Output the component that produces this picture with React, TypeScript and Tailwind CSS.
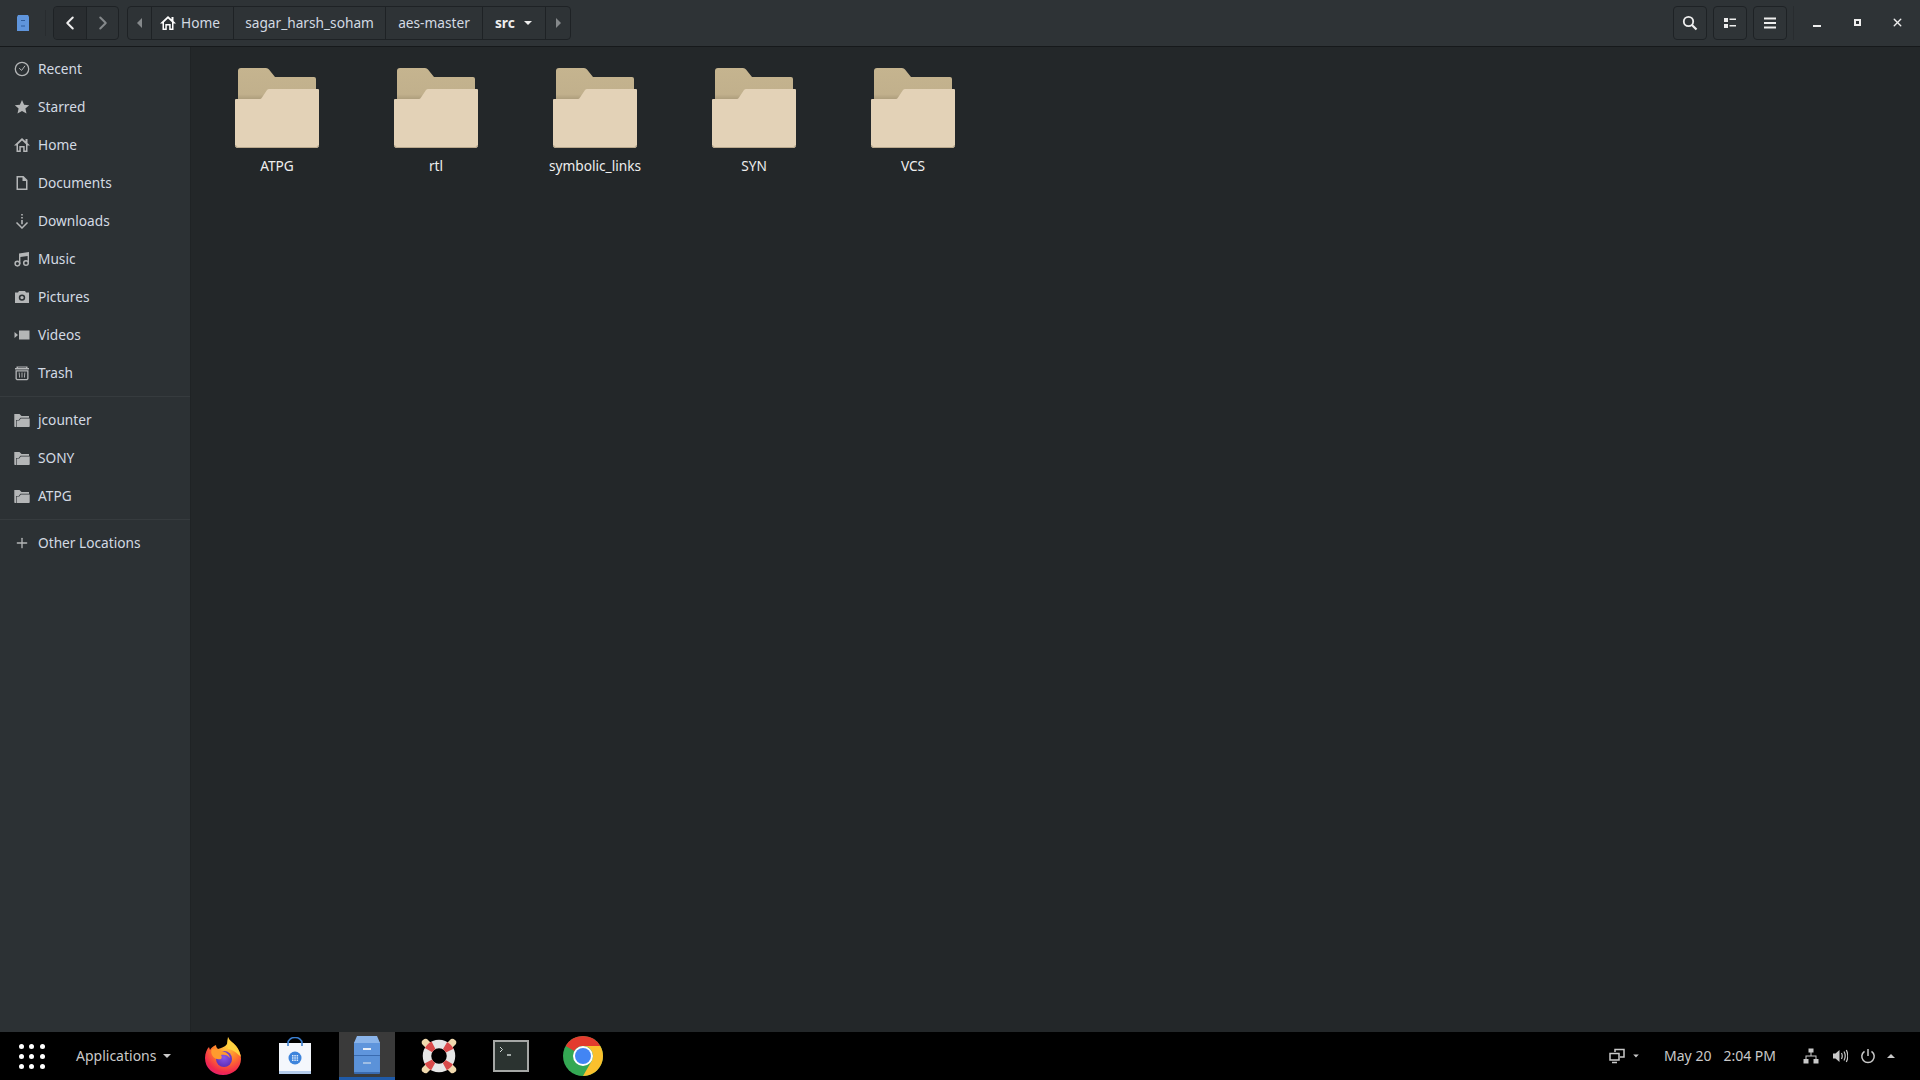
import React from 'react'
import { ChevronLeft, ChevronRight, X, Plus } from 'lucide-react'

const font = { fontFamily: '"Noto Sans", sans-serif' }

const Ico = ({ children, size = 16, className = '' }: { children: React.ReactNode; size?: number; className?: string }) => (
  <svg width={size} height={size} viewBox="0 0 16 16" fill="currentColor" className={`shrink-0 ${className}`}>
    {children}
  </svg>
)

const ClockIcon = () => (
  <Ico>
    <circle cx="8" cy="8" r="6.7" fill="none" stroke="currentColor" strokeWidth="1.3" />
    <path d="M5.2 7.2 7.6 9.4 11 4.8" fill="none" stroke="currentColor" strokeWidth="1" />
  </Ico>
)
const StarIcon = () => (
  <Ico>
    <path d="M8 1l2.1 4.7 5.1.5-3.8 3.4 1.1 5L8 12l-4.500 2.600 1.100-5L.8 6.200l5.100-.5z" />
  </Ico>
)
const HomeIcon = () => (
  <Ico>
    <path d="M8 1 0 8.500h2.500V15h4.300v-4.500h2.400V15h4.300V8.500H16l-2.500-2.400V2h-2v2.200zM8 3.600 12 7.300v6.200h-1.300V9H5.300v4.500H4V7.300z" fillRule="evenodd" />
  </Ico>
)
const DocIcon = () => (
  <Ico>
    <path d="M2.500 1h7L13.500 5v10h-11zM4 2.500v11h8V6H8.500V2.500z" fillRule="evenodd" />
  </Ico>
)
const DownloadIcon = () => (
  <Ico>
    <path d="M7.200 1h1.600v1.600H7.200zM7.200 4h1.600v1.600H7.200zM7.200 7h1.600v4.200H7.200z" />
    <path d="M2.500 9.500 8 15l5.500-5.500" fill="none" stroke="currentColor" strokeWidth="1.500" />
  </Ico>
)
const MusicIcon = () => (
  <Ico>
    <path d="M5 2.500 15 1v10h-1.400V5L6.400 6v7H5z" />
    <circle cx="3.400" cy="12.600" r="2.300" fill="none" stroke="currentColor" strokeWidth="1.500" />
    <circle cx="12" cy="12" r="2.300" fill="none" stroke="currentColor" strokeWidth="1.500" />
  </Ico>
)
const CameraIcon = () => (
  <Ico>
    <path d="M1 3.500h3L5 2h6l1 1.500h3V14H1zM8 5.400a3.200 3.200 0 1 0 0 6.400 3.200 3.200 0 0 0 0-6.400zM8 6.900a1.700 1.700 0 1 1 0 3.400 1.700 1.700 0 0 1 0-3.400z" fillRule="evenodd" />
  </Ico>
)
const VideoIcon = () => (
  <Ico>
    <path d="M5 3.500h10.500v9H5zM.5 5 4 8 .5 11z" />
  </Ico>
)
const TrashIcon = () => (
  <Ico>
    <path d="M2.500 1.500h11V3H15v1.500H1V3h1.500zM4 2.500V3h8v-.5z" fillRule="evenodd" />
    <path d="M1.500 5.200h13V14l-1.300 1.300H2.800L1.500 14zM2.800 6.500V13.400l.6.600h9.200l.6-.6V6.500z" fillRule="evenodd" />
    <path d="M4.700 7.500h.9l.4 5h-.9zM7.550 7.500h.9v5h-.9zM10.400 7.500h.9l-.4 5H10z" />
  </Ico>
)
const SmallFolderIcon = () => (
  <Ico>
    <path d="M.3 2h5.200l2 2H15v1.800H6.500L4.700 8H2v7H1q-.7 0-.7-.8z" />
    <path d="M2.600 15V8.600h2.600l1.600-2.200h8.900V14.200q0 .8-.8.8z" />
  </Ico>
)

const placeGroups = [
  [
    { label: 'Recent', icon: <ClockIcon /> },
    { label: 'Starred', icon: <StarIcon /> },
    { label: 'Home', icon: <HomeIcon /> },
    { label: 'Documents', icon: <DocIcon /> },
    { label: 'Downloads', icon: <DownloadIcon /> },
    { label: 'Music', icon: <MusicIcon /> },
    { label: 'Pictures', icon: <CameraIcon /> },
    { label: 'Videos', icon: <VideoIcon /> },
    { label: 'Trash', icon: <TrashIcon /> },
  ],
  [
    { label: 'jcounter', icon: <SmallFolderIcon /> },
    { label: 'SONY', icon: <SmallFolderIcon /> },
    { label: 'ATPG', icon: <SmallFolderIcon /> },
  ],
  [{ label: 'Other Locations', icon: <Plus size={16} strokeWidth={2} /> }],
]

const folders = ['ATPG', 'rtl', 'symbolic_links', 'SYN', 'VCS']

const FolderIcon = () => (
  <svg width="84" height="80" viewBox="0 0 84 80">
    <defs>
      <linearGradient id="folderBack" x1="0" y1="0" x2="0" y2="1">
        <stop offset="0" stopColor="#c5b48f" />
        <stop offset="0.75" stopColor="#c1b08c" />
        <stop offset="1" stopColor="#9e8f70" />
      </linearGradient>
    </defs>
    <path d="M3 3q0-3 3-3h25q2 0 3 1.500l6 7.500h39q2 0 2 2v24H3z" fill="url(#folderBack)" />
    <path d="M0 32q0-1 1-1h24q1 0 2-1.500l5-7.500q1-1 2-1h49q1 0 1 1v55q0 3-3 3H3q-3 0-3-3z" fill="#e3d2b7" />
    <path d="M0.500 77q0 2.500 2.500 2.500h78q2.500 0 2.500-2.500" fill="none" stroke="#b9a88c" strokeWidth="1" />
  </svg>
)

const FileCabinet = () => (
  <svg width="26" height="38" viewBox="0 0 26 38">
    <path d="M3 2q0-2 2-2h16q2 0 2 2l3 5v29q0 2-2 2H2q-2 0-2-2V7z" fill="#5a8fd6" />
    <path d="M0 7h26v12H0z" fill="#5f95dc" />
    <path d="M3 0h20l3 7H0z" fill="#8ab4ea" />
    <path d="M1 20h24v16H1z" fill="#5b92d9" />
    <path d="M0 19.500h26" stroke="#3a6bb0" strokeWidth="1" />
    <path d="M9 13h8" stroke="#e8eef7" strokeWidth="2" />
    <path d="M9 27h8" stroke="#b6cde9" strokeWidth="1.500" />
    <path d="M0 36h26v1q0 1-2 1H2q-2 0-2-1z" fill="#3a6bb0" />
  </svg>
)

const Firefox = () => (
  <svg width="38" height="38" viewBox="0 0 38 38">
    <defs>
      <radialGradient id="ffBody" cx="0.6" cy="0.25" r="0.85">
        <stop offset="0" stopColor="#ffcb3d" />
        <stop offset="0.45" stopColor="#ff7a2a" />
        <stop offset="0.8" stopColor="#f2284e" />
        <stop offset="1" stopColor="#d81f7e" />
      </radialGradient>
      <radialGradient id="ffGlobe" cx="0.5" cy="0.4" r="0.65">
        <stop offset="0" stopColor="#8a58e8" />
        <stop offset="1" stopColor="#5b2bb5" />
      </radialGradient>
    </defs>
    <path d="M24 0c1 4 5 5 8 9 4 5 5 10 5 13 0 9-8 16-18 16C9 38 1 31 1 21c0-5 2-9 4-11l1 3c1-2 3-4 6-5 0 2 1 3 2 4 3-1 7-2 9-5 1-2 1-5 1-7z" fill="url(#ffBody)" />
    <path d="M24 0c1 4 5 5 8 9 3 4 4 7 5 11-3-3-7-7-13-8-1-3-1-8 0-12z" fill="#ffd23f" />
    <circle cx="20" cy="22" r="8" fill="url(#ffGlobe)" />
    <path d="M8 12c3 0 7 1 10 2 4 1 7 3 8 7-2-3-6-4-9-3 1 1 1 3 0 4-3 1-7 0-9-4-1-2-1-4 0-6z" fill="#ff9b2e" />
  </svg>
)

const Bag = () => (
  <svg width="34" height="38" viewBox="0 0 34 38">
    <path d="M10 8V6a7 5.500 0 0 1 14 0v2" fill="none" stroke="#3b7fd0" strokeWidth="1.600" />
    <path d="M1 6h32v30H1z" fill="#f4f7fc" />
    <path d="M1 34h32v3H1z" fill="#b3cbea" />
    <path d="M10 6v3M24 6v3" stroke="#3b7fd0" strokeWidth="1.600" />
    <circle cx="17" cy="21" r="6.500" fill="#3d84dc" />
    <path d="M14 18h1.500v1.500H14zM16.300 18h1.500v1.500h-1.500zM18.600 18h1.500v1.500h-1.500zM14 20.300h1.500v1.500H14zM16.300 20.300h1.500v1.500h-1.500zM18.600 20.300h1.500v1.500h-1.500zM14 22.600h1.500v1.500H14zM16.300 22.600h1.500v1.500h-1.500zM18.600 22.600h1.500v1.500h-1.500z" fill="#dce9fa" />
  </svg>
)

const Lifesaver = () => (
  <svg width="38" height="38" viewBox="0 0 38 38">
    <path d="M7 2l6 6-5 5-6-6q-1-3 1-4 2-2 4-1zM31 2l-6 6 5 5 6-6q1-3-1-4-2-2-4-1zM7 36l6-6-5-5-6 6q-1 3 1 4 2 2 4 1zM31 36l-6-6 5-5 6 6q1 3-1 4-2 2-4 1z" fill="#f0d9ae" />
    <circle cx="19" cy="19" r="12" fill="none" stroke="#e6e6e6" strokeWidth="8.500" />
    <circle cx="19" cy="19" r="12" fill="none" stroke="#d94a4a" strokeWidth="8.500" strokeDasharray="7 11.850" strokeDashoffset="3.500" transform="rotate(45 19 19)" />
  </svg>
)

const TerminalApp = () => (
  <div className="flex h-[32px] w-[36px] flex-col border-2 border-[#a5a7a5] bg-[#2b3330] px-1 pt-1">
    <svg width="14" height="12" viewBox="0 0 14 12">
      <path d="M1 1l2.500 2.500L1 6" fill="none" stroke="#d7dedb" strokeWidth="1" />
      <path d="M8 9h4" stroke="#d7dedb" strokeWidth="1.400" />
    </svg>
  </div>
)

const Chrome = () => (
  <svg width="40" height="40" viewBox="0 0 40 40">
    <circle cx="20" cy="20" r="20" fill="#34a853" />
    <path d="M20 0a20 20 0 0 1 17.320 10H20a10 10 0 0 0-8.660 5L2.680 10A20 20 0 0 1 20 0z" fill="#e33b2e" />
    <path d="M37.320 10A20 20 0 0 1 20 40l8.660-15A10 10 0 0 0 28.660 15 10 10 0 0 0 20 10z" fill="#fbc02d" />
    <circle cx="20" cy="20" r="10" fill="#ffffff" />
    <circle cx="20" cy="20" r="8" fill="#4285f4" />
  </svg>
)

const TriDown = ({ className = '' }: { className?: string }) => (
  <span className={`inline-block h-0 w-0 border-x-[4.500px] border-t-[4.500px] border-x-transparent border-t-current ${className}`} />
)

const ToolBtn = ({ children }: { children: React.ReactNode }) => (
  <button className="flex h-[34px] w-[34px] items-center justify-center rounded-[4px] border border-[#1e2225] bg-[#2f3437] text-[#eeeeee]">
    {children}
  </button>
)

const crumbs = [
  { label: 'sagar_harsh_soham', w: 'w-[152px]' },
  { label: 'aes-master', w: 'w-[97px]' },
]

export default function App() {
  return (
    <div className="flex h-[1080px] w-[1920px] flex-col overflow-hidden bg-[#232729] text-[13.700px] text-[#d3dae3]" style={font}>
      {/* Header bar */}
      <header className="flex h-[47px] shrink-0 items-center border-b border-[#16191b] bg-[#2e3336] pb-[1px]">
        <div className="flex w-[46px] items-center justify-center border-r border-[#282c2f] py-[5px] pl-[1px]">
          <svg width="12" height="16" viewBox="0 0 12 16">
            <path d="M1 0h10l1 2v14H0V2z" fill="#5f95dc" />
            <path d="M4 5.500h4M4 11h4" stroke="#2f5d9c" strokeWidth="1" />
          </svg>
        </div>
        <div className="ml-[7px] flex h-[34px] w-[66px] rounded-[4px] border border-[#1e2225]">
          <div className="flex w-[33px] items-center justify-center rounded-l-[4px] border-r border-[#1e2225] bg-[#292d30] text-[#eeeeee]">
            <ChevronLeft size={22} strokeWidth={2.2} />
          </div>
          <div className="flex flex-1 items-center justify-center text-[#85898b]">
            <ChevronRight size={22} strokeWidth={2.2} />
          </div>
        </div>
        <div className="ml-[8px] flex h-[34px] rounded-[4px] border border-[#1e2225]">
          <div className="flex w-[24px] items-center justify-center border-r border-[#1e2225] text-[#85898b]">
            <span className="h-0 w-0 border-y-[5px] border-r-[5px] border-y-transparent border-r-current" />
          </div>
          <div className="flex w-[82px] items-center gap-[5px] border-r border-[#1e2225] pl-[8px]">
            <span className="text-[#ffffff]">
              <HomeIcon />
            </span>
            <span className="pt-[1px]">Home</span>
          </div>
          {crumbs.map((c) => (
            <div key={c.label} className={`flex items-center justify-center border-r border-[#1e2225] pt-[1px] ${c.w}`}>
              {c.label}
            </div>
          ))}
          <div className="flex w-[63px] items-center gap-[9px] border-r border-[#1e2225] pl-[12px] pt-[1px] font-bold text-[#eeeeee]">
            <span>src</span>
            <TriDown />
          </div>
          <div className="flex w-[24px] items-center justify-center text-[#85898b]">
            <span className="h-0 w-0 border-y-[5px] border-l-[5px] border-y-transparent border-l-current" />
          </div>
        </div>

        <div className="ml-auto flex items-center gap-[6px]">
          <ToolBtn>
            <svg width="16" height="16" viewBox="0 0 16 16" fill="none" stroke="currentColor">
              <circle cx="6.500" cy="6.500" r="4.700" strokeWidth="1.800" />
              <path d="M10 10l4.500 4.500" strokeWidth="2.200" />
            </svg>
          </ToolBtn>
          <ToolBtn>
            <Ico>
              <path d="M2 3h4v4H2zM2 9h4v4H2zM7.500 3.500h6.500v1.500H7.500zM7.500 10h6.500v1.500H7.500z" />
            </Ico>
          </ToolBtn>
          <ToolBtn>
            <Ico>
              <path d="M2 2.500h12v2H2zM2 7h12v2H2zM2 11.500h12v2H2z" />
            </Ico>
          </ToolBtn>
        </div>
        <div className="ml-[6px] flex h-[34px] items-center border-l border-[#282c2f] pl-[3px] pr-[3px] text-[#eeeeee]">
          <div className="flex w-[40px] justify-center pt-[6px]">
            <span className="h-[2px] w-[8px] bg-current" />
          </div>
          <div className="flex w-[40px] justify-center">
            <span className="h-[7px] w-[7px] border-2 border-current" />
          </div>
          <div className="flex w-[40px] justify-center">
            <X size={13} strokeWidth={2.6} />
          </div>
        </div>
      </header>

      <div className="flex min-h-0 flex-1">
        {/* Sidebar */}
        <aside className="flex w-[191px] shrink-0 flex-col border-r border-[#1f2325] bg-[#2c3134]">
          {placeGroups.map((group, i) => (
            <div key={i} className={i === 0 ? 'pt-[3px]' : 'border-t border-[#363b3e] pt-[4px]'}>
              {group.map((item) => (
                <div key={item.label} className="flex h-[38px] items-center gap-[8px] pl-[14px]">
                  <span className="flex w-[16px] justify-center text-[#b4b6b7]">{item.icon}</span>
                  <span>{item.label}</span>
                </div>
              ))}
              {i < 2 && <div className="h-[4px]" />}
            </div>
          ))}
        </aside>

        {/* Icon view */}
        <main className="flex flex-1 items-start pl-[6px] pt-[21px]">
          {folders.map((name) => (
            <div key={name} className="flex w-[159px] flex-col items-center">
              <FolderIcon />
              <span className="mt-[8px] pl-[1px] text-[#eeeeee]">{name}</span>
            </div>
          ))}
        </main>
      </div>

      {/* Panel */}
      <footer className="flex h-[48px] shrink-0 items-center bg-black text-[14px] text-[#c9c9c9]">
        <div className="ml-[19px] grid w-[26px] grid-cols-3 gap-x-[5px] gap-y-[5px]">
          {Array.from({ length: 9 }).map((_, i) => (
            <span key={i} className="h-[5px] w-[5px] rounded-full bg-white" />
          ))}
        </div>
        <div className="ml-[31px] flex w-[97px] items-center gap-[7px]">
          <span className="pb-[1px]">Applications</span>
          <TriDown />
        </div>
        <div className="ml-[14px] flex h-full items-center">
          <div className="flex w-[72px] justify-center">
            <Firefox />
          </div>
          <div className="flex w-[72px] justify-center">
            <Bag />
          </div>
          <div className="ml-[8px] flex h-full w-[56px] items-center justify-center border-b-[3px] border-[#1f5aa8] bg-[#3a3a3a]">
            <FileCabinet />
          </div>
          <div className="ml-[8px] flex w-[72px] justify-center">
            <Lifesaver />
          </div>
          <div className="flex w-[72px] justify-center">
            <TerminalApp />
          </div>
          <div className="flex w-[72px] justify-center">
            <Chrome />
          </div>
        </div>

        <div className="ml-auto flex h-full items-center pr-[25px]">
          <svg width="16" height="16" viewBox="0 0 16 16" fill="none" stroke="currentColor" strokeWidth="1.500">
            <path d="M6 4V1.500h9V9h-4" />
            <path d="M1 5.500h9V12H1zM3 14.500h5" />
          </svg>
          <TriDown className="ml-[7px] scale-[0.7]" />
          <span className="ml-[24px] pb-[1px]">May 20</span>
          <span className="ml-[12px] pb-[1px]">2:04 PM</span>
          <svg width="16" height="16" viewBox="0 0 16 16" fill="currentColor" className="ml-[27px]">
            <path d="M5.500 0.500h5v4h-5zM0.500 11h5v4.500h-5zM10.500 11h5v4.500h-5zM7.500 4.500h1V7.500h5V11h-1V8.500h-9V11h-1V7.500h5z" />
          </svg>
          <svg width="16" height="16" viewBox="0 0 16 16" fill="currentColor" className="ml-[13px]">
            <path d="M1 5.500h2.500L7.500 2v12l-4-3.500H1z" />
            <path d="M9.500 5q1.500 3 0 6M12 3.500q2.400 4.500 0 9M14.300 2q3 6 0 12" fill="none" stroke="currentColor" strokeWidth="1.200" />
          </svg>
          <svg width="16" height="16" viewBox="0 0 16 16" fill="none" stroke="currentColor" strokeWidth="1.500" className="ml-[12px]">
            <path d="M8 1v7" />
            <path d="M4.500 3.300a6.200 6.200 0 1 0 7 0" />
          </svg>
          <span className="ml-[11px] h-0 w-0 border-x-[4.500px] border-b-[4.500px] border-x-transparent border-b-current" />
        </div>
      </footer>
    </div>
  )
}
